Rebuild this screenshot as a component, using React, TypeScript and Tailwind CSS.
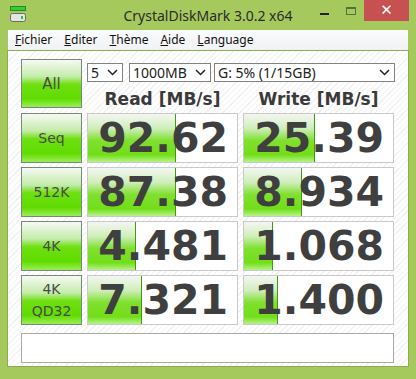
import React from "react";

const font = { fontFamily: '"DejaVu Sans", Verdana, sans-serif' };

type Row = { label: string[]; read: string; readFill: number; write: string; writeFill: number };

const rows: Row[] = [
  { label: ["Seq"], read: "92.62", readFill: 88, write: "25.39", writeFill: 71 },
  { label: ["512K"], read: "87.38", readFill: 88, write: "8.934", writeFill: 58 },
  { label: ["4K"], read: "4.481", readFill: 48, write: "1.068", writeFill: 29 },
  { label: ["4K", "QD32"], read: "7.321", readFill: 54, write: "1.400", writeFill: 34 },
];

function GreenButton({ children, className }: { children: React.ReactNode; className?: string }) {
  return (
    <div
      className={`flex flex-col items-center justify-center border border-[#78887a] bg-[linear-gradient(to_bottom,#f6f9f3_0%,#c4ecab_35%,#6ee010_52%,#60dc00_82%,#9aee55_100%)] text-[#4a4a4a] leading-[18px] ${className ?? ""}`}
    >
      {children}
    </div>
  );
}

function ResultBox({ value, fill }: { value: string; fill: number }) {
  return (
    <div className="relative h-[50px] w-[151px] border border-[#c9c9c9] bg-white">
      <div
        className="absolute left-0 top-0 h-full border-r border-[#3f9a10] bg-[linear-gradient(to_bottom,#f4f6f2_0%,#cfeebb_30%,#80e030_55%,#72de18_85%,#b6f38a_100%)]"
        style={{ width: fill }}
      />
      <div
        className="relative flex h-full items-center justify-end pr-[9px] text-[41px] font-bold leading-none text-[#3f3f3f]"
        style={font}
      >
        {value}
      </div>
    </div>
  );
}

function Select({ text, className }: { text: string; className: string }) {
  return (
    <div
      className={`flex h-[19px] items-center justify-between border border-[#828282] bg-white pl-[3px] pr-[4px] text-[14px] leading-none text-[#222] ${className}`}
      style={{ fontFamily: '"Noto Sans", sans-serif' }}
    >
      <span>{text}</span>
      <svg width="11" height="7" viewBox="0 0 11 7">
        <polyline points="1,1 5.5,5.5 10,1" fill="none" stroke="#222" strokeWidth="1.5" />
      </svg>
    </div>
  );
}

export default function App() {
  return (
    <div className="flex h-[379px] w-[416px] flex-col overflow-hidden bg-[#a6c95e]">
      {/* title bar */}
      <div className="relative flex h-[30px] shrink-0 items-start">
        <svg className="absolute left-[10px] top-[6px]" width="16" height="17" viewBox="0 0 16 17">
          <rect x="0.5" y="0.5" width="15" height="4" fill="#3cc83c" stroke="#1f8f1f" />
          <rect x="0.5" y="7.5" width="15" height="8" rx="2" fill="#e4e4e4" stroke="#6a6a6a" />
          <rect x="11" y="10" width="2" height="3" fill="#2ec82e" />
        </svg>
        <div
          className="w-full pt-[7px] text-center text-[14px] leading-[18px] text-[#2b2b2b]"
          style={{ fontFamily: '"Noto Sans", sans-serif' }}
        >
          CrystalDiskMark 3.0.2 x64
        </div>
        <div className="absolute left-[320px] top-[13px] h-[2px] w-[9px] bg-[#222]" />
        <div className="absolute left-[346px] top-[7px] h-[8px] w-[10px] border border-t-2 border-[#55703a]" />
        <div className="absolute left-[364px] top-0 flex h-[21px] w-[45px] items-center justify-center bg-[#c75050] text-[15px] font-bold leading-none text-white" style={font}>
          ✕
        </div>
      </div>

      {/* menu */}
      <div
        className="mx-[8px] flex h-[20px] shrink-0 items-center gap-[12px] bg-[linear-gradient(to_bottom,#fbfcfd,#f1f2f4)] pl-[7px] text-[12px] leading-none text-[#111]"
        style={{ fontFamily: '"Noto Sans", sans-serif' }}
      >
        <span><u>F</u>ichier</span>
        <span><u>E</u>diter</span>
        <span><u>T</u>hème</span>
        <span><u>A</u>ide</span>
        <span><u>L</u>anguage</span>
      </div>

      {/* client */}
      <div className="mx-[7px] mb-[12px] flex-1 border border-[#8cad4f] bg-[repeating-linear-gradient(135deg,#ffffff_0px,#ffffff_3px,#f1f1f1_3px,#f1f1f1_4px)] pl-[13px] pt-[8px]">
        <div className="flex gap-[5px]">
          <GreenButton className="h-[49px] w-[61px] text-[15px]">
            <span style={font}>All</span>
          </GreenButton>
          <div className="flex flex-col">
            <div className="mt-[4px] flex">
              <Select text="5" className="w-[36px]" />
              <Select text="1000MB" className="ml-[6px] w-[82px]" />
              <Select text="G: 5% (1/15GB)" className="ml-[3px] w-[181px]" />
            </div>
            <div className="mt-[7px] flex gap-[5px] text-[17px] font-bold leading-[20px] text-[#3a3a3a]" style={font}>
              <div className="w-[151px] text-center">Read [MB/s]</div>
              <div className="w-[151px] text-center">Write [MB/s]</div>
            </div>
          </div>
        </div>

        <div className="mt-[4px] flex flex-col gap-[4px]">
          {rows.map((r) => (
            <div key={r.read} className="flex gap-[5px]">
              <GreenButton className="h-[50px] w-[61px] text-[14px]">
                {r.label.map((l) => (
                  <span key={l} style={font} className={r.label.length > 1 ? "leading-[22px]" : ""}>
                    {l}
                  </span>
                ))}
              </GreenButton>
              <ResultBox value={r.read} fill={r.readFill} />
              <ResultBox value={r.write} fill={r.writeFill} />
            </div>
          ))}
        </div>

        <div className="mt-[8px] h-[30px] w-[373px] border border-[#a9a9a9] bg-white" />
      </div>
    </div>
  );
}
